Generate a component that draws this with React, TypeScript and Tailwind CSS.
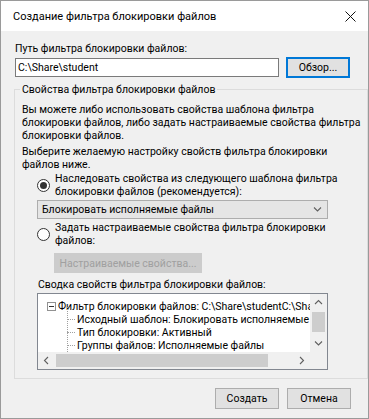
import React from "react";

const FONT = "font-['Roboto','Noto_Sans','Liberation_Sans',sans-serif]";

function Radio({ checked }: { checked?: boolean }) {
  return (
    <div className="w-[13px] h-[13px] rounded-full border border-[#333333] bg-white flex items-center justify-center shrink-0">
      {checked && <div className="w-[7px] h-[7px] rounded-full bg-[#333333]" />}
    </div>
  );
}

function Chevron({ dir }: { dir: "up" | "down" | "left" | "right" }) {
  const paths: Record<string, string> = {
    down: "M1 2.5 L4.5 6 L8 2.5",
    up: "M1 6 L4.5 2.5 L8 6",
    left: "M6 1 L2.5 4.5 L6 8",
    right: "M3 1 L6.5 4.5 L3 8",
  };
  return (
    <svg width="9" height="9" viewBox="0 0 9 9" fill="none">
      <path d={paths[dir]} stroke="#606060" strokeWidth="1.1" />
    </svg>
  );
}

export default function App() {
  return (
    <div
      className={`w-[369px] h-[419px] border border-[#9a9a9a] bg-[#f0f0f0] flex flex-col text-[10.5px] leading-[13px] text-black ${FONT}`}
    >
      {/* Title bar */}
      <div className="h-[30px] bg-white flex items-center justify-between pl-[12px] pr-[12px] shrink-0">
        <span className="text-[11px]">Создание фильтра блокировки файлов</span>
        <svg width="11" height="11" viewBox="0 0 11 11">
          <path d="M0.5 0.5 L10.5 10.5 M10.5 0.5 L0.5 10.5" stroke="#111" strokeWidth="1" />
        </svg>
      </div>

      {/* Path row */}
      <div className="pl-[14px]">
        <div className="mt-[11px] whitespace-nowrap">Путь фильтра блокировки файлов:</div>
        <div className="mt-[2px] flex items-center gap-[7px]">
          <div className="w-[264px] h-[19px] bg-white border border-[#7a7a7a] flex items-center px-[2px] whitespace-nowrap">
            {"C:\\Share\\student"}
          </div>
          <div className="w-[64px] h-[21px] bg-[#e1e1e1] border border-[#0078d7] shadow-[inset_0_0_0_1px_#0078d7] flex items-center justify-center">
            Обзор...
          </div>
        </div>
      </div>

      {/* Group box */}
      <fieldset className="ml-[13px] mt-[5px] w-[342px] h-[296px] border border-[#dcdcdc] px-[7px] shrink-0">
        <legend className="ml-[-2px] px-[2px] whitespace-nowrap">Свойства фильтра блокировки файлов</legend>

        <div className="mt-[7px] whitespace-nowrap">
          Вы можете либо использовать свойства шаблона фильтра
          <br />
          блокировки файлов, либо задать настраиваемые свойства фильтра
          <br />
          блокировки файлов.
        </div>
        <div className="mt-[3px] whitespace-nowrap">
          Выберите желаемую настройку свойств фильтра блокировки
          <br />
          файлов ниже.
        </div>

        <div className="mt-[1px] ml-[15px] flex items-center gap-[5px]">
          <Radio checked />
          <div className="whitespace-nowrap">
            Наследовать свойства из следующего шаблона фильтра
            <br />
            блокировки файлов (рекомендуется):
          </div>
        </div>

        <div className="mt-[2px] ml-[15px] w-[291px] h-[19px] bg-[#e5e5e5] border border-[#adadad] flex items-center justify-between pl-[4px] pr-[5px]">
          <span className="whitespace-nowrap">Блокировать исполняемые файлы</span>
          <Chevron dir="down" />
        </div>

        <div className="mt-[2px] ml-[15px] flex items-center gap-[5px]">
          <Radio />
          <div className="whitespace-nowrap">
            Задать настраиваемые свойства фильтра блокировки
            <br />
            файлов:
          </div>
        </div>

        <div className="mt-[6px] ml-[32px] w-[148px] h-[20px] bg-[#cccccc] text-[#a0a0a0] flex items-center justify-center whitespace-nowrap">
          Настраиваемые свойства...
        </div>

        <div className="mt-[5px] ml-[16px] whitespace-nowrap">Сводка свойств фильтра блокировки файлов:</div>

        {/* Tree view */}
        <div className="mt-[2px] ml-[15px] w-[291px] h-[77px] bg-white border border-[#828790] grid grid-cols-[272px_17px] grid-rows-[58px_17px]">
          <div className="relative overflow-hidden pt-[6px] whitespace-nowrap">
            <div className="h-[13px] flex items-center pl-[9px]">
              <div className="w-[9px] h-[9px] border border-[#919191] flex items-center justify-center shrink-0">
                <div className="w-[5px] h-px bg-[#333]" />
              </div>
              <div className="w-[5px] border-t border-dotted border-[#a0a0a0]" />
              <span className="ml-[2px]">{"Фильтр блокировки файлов: C:\\Share\\studentC:\\Share\\student"}</span>
            </div>
            <div className="absolute left-[29px] top-[13px] bottom-0 border-l border-dotted border-[#a0a0a0]" />
            {[
              "Исходный шаблон: Блокировать исполняемые файлы",
              "Тип блокировки: Активный",
              "Группы файлов: Исполняемые файлы",
            ].map((t) => (
              <div key={t} className="h-[13px] flex items-center pl-[29px]">
                <div className="w-[8px] shrink-0 border-t border-dotted border-[#a0a0a0]" />
                <span className="ml-[2px]">{t}</span>
              </div>
            ))}
          </div>

          {/* vertical scrollbar */}
          <div className="bg-[#f0f0f0] flex flex-col">
            <div className="h-[17px] flex items-center justify-center">
              <Chevron dir="up" />
            </div>
            <div className="flex-1 px-[2px] py-[1px]">
              <div className="h-[20px] bg-[#cdcdcd]" />
            </div>
            <div className="h-[17px] flex items-center justify-center">
              <Chevron dir="down" />
            </div>
          </div>

          {/* horizontal scrollbar */}
          <div className="bg-[#f0f0f0] flex">
            <div className="w-[17px] flex items-center justify-center">
              <Chevron dir="left" />
            </div>
            <div className="flex-1 py-[2px] px-px">
              <div className="w-[212px] h-full bg-[#cdcdcd]" />
            </div>
            <div className="w-[17px] flex items-center justify-center">
              <Chevron dir="right" />
            </div>
          </div>
          <div className="bg-[#f0f0f0]" />
        </div>
      </fieldset>

      {/* Buttons */}
      <div className="mt-[9px] flex justify-end gap-[8px] pr-[17px]">
        <div className="w-[64px] h-[21px] bg-[#e1e1e1] border border-[#adadad] flex items-center justify-center">
          Создать
        </div>
        <div className="w-[64px] h-[21px] bg-[#e1e1e1] border border-[#adadad] flex items-center justify-center">
          Отмена
        </div>
      </div>
    </div>
  );
}
